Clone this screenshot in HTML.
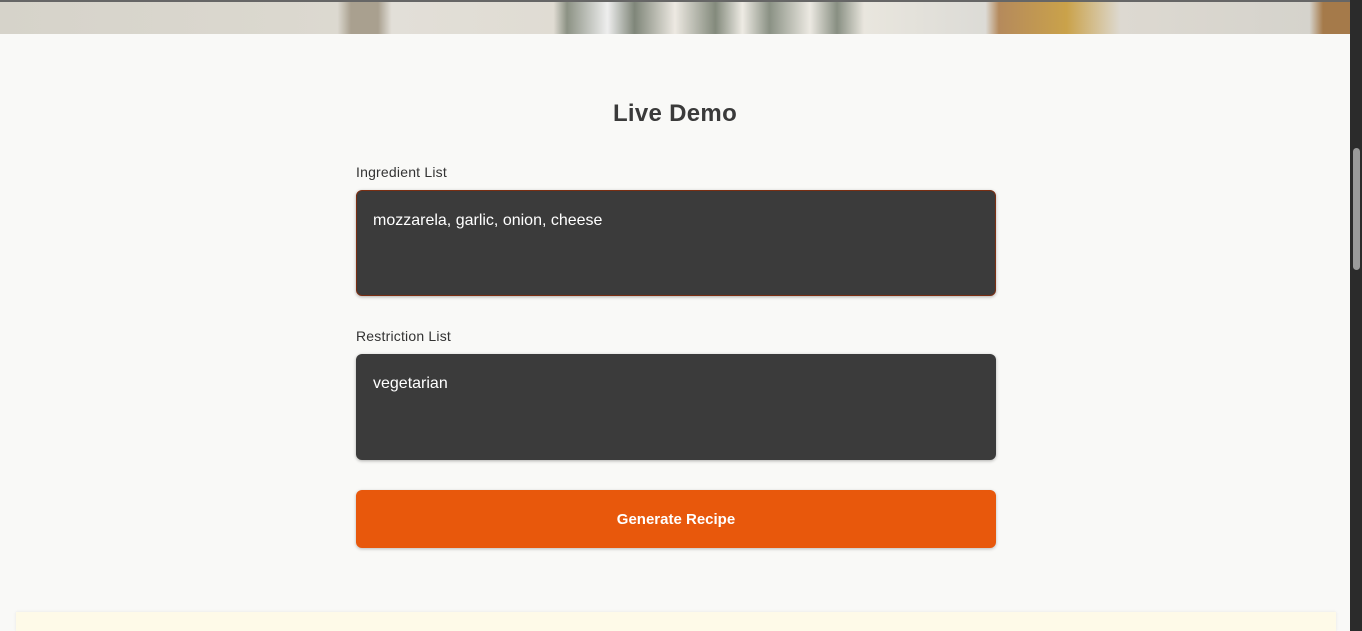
<!DOCTYPE html>
<html style="overflow:hidden;height:631px"><head><style>
*{box-sizing:border-box;margin:0;padding:0}
body{width:1362px;height:631px;overflow:hidden;background:#f9f9f7;font-family:"Liberation Sans",sans-serif;position:relative}
.hero{position:absolute;left:0;top:0;width:1350px;height:34px;background:linear-gradient(90deg,#d6d3ca 0,#dcd9d0 25%,#a9a08f 26%,#a9a08f 28%,#e2dfd8 29%,#e0dcd3 41%,#8c9284 42%,#eee 45%,#7f8679 47%,#ede9e2 50%,#838a7c 53%,#eeebe4 55%,#8a9184 57%,#ece9e2 60%,#888f82 62%,#e9e6de 64%,#dcdbd6 73%,#b58a5c 74%,#caa24a 79%,#ddd9d1 83%,#d5d3cc 97%,#a57a4a 98%);border-top:2px solid #666}
.sb{position:absolute;right:0;top:0;width:12px;height:631px;background:#2b2b2b}
.sb div{position:absolute;left:3px;top:148px;width:7px;height:122px;background:#9a9a9a;border-radius:4px}
h2{position:absolute;top:100px;left:0;width:1350px;text-align:center;font-size:24px;font-weight:bold;color:#3a3a3a;letter-spacing:0.3px}
.lbl{position:absolute;left:356px;font-size:14px;color:#333;letter-spacing:0.2px}
.ta{position:absolute;left:356px;width:640px;height:106px;background:#3b3b3b;border-radius:6px;color:#fff;font-size:16px;padding:21px 17px;box-shadow:0 1px 3px rgba(0,0,0,.3)}
.btn{position:absolute;left:356px;top:490px;width:640px;height:58px;background:#e8580c;border-radius:6px;color:#fff;font-weight:bold;font-size:15px;text-align:center;line-height:60px;box-shadow:0 1px 3px rgba(0,0,0,.25)}
.card{position:absolute;left:16px;top:612px;width:1320px;height:19px;background:#fefae8;box-shadow:0 0 3px rgba(0,0,0,.08)}
</style></head><body>
<div class="hero"></div>
<h2>Live Demo</h2>
<div class="lbl" style="top:164px">Ingredient List</div>
<div class="ta" style="top:190px;border:1px solid #7a2e12;padding-left:16px">mozzarela, garlic, onion, cheese</div>
<div class="lbl" style="top:328px">Restriction List</div>
<div class="ta" style="top:354px">vegetarian</div>
<div class="btn">Generate Recipe</div>
<div class="card"></div>
<div class="sb"><div></div></div>
</body></html>
